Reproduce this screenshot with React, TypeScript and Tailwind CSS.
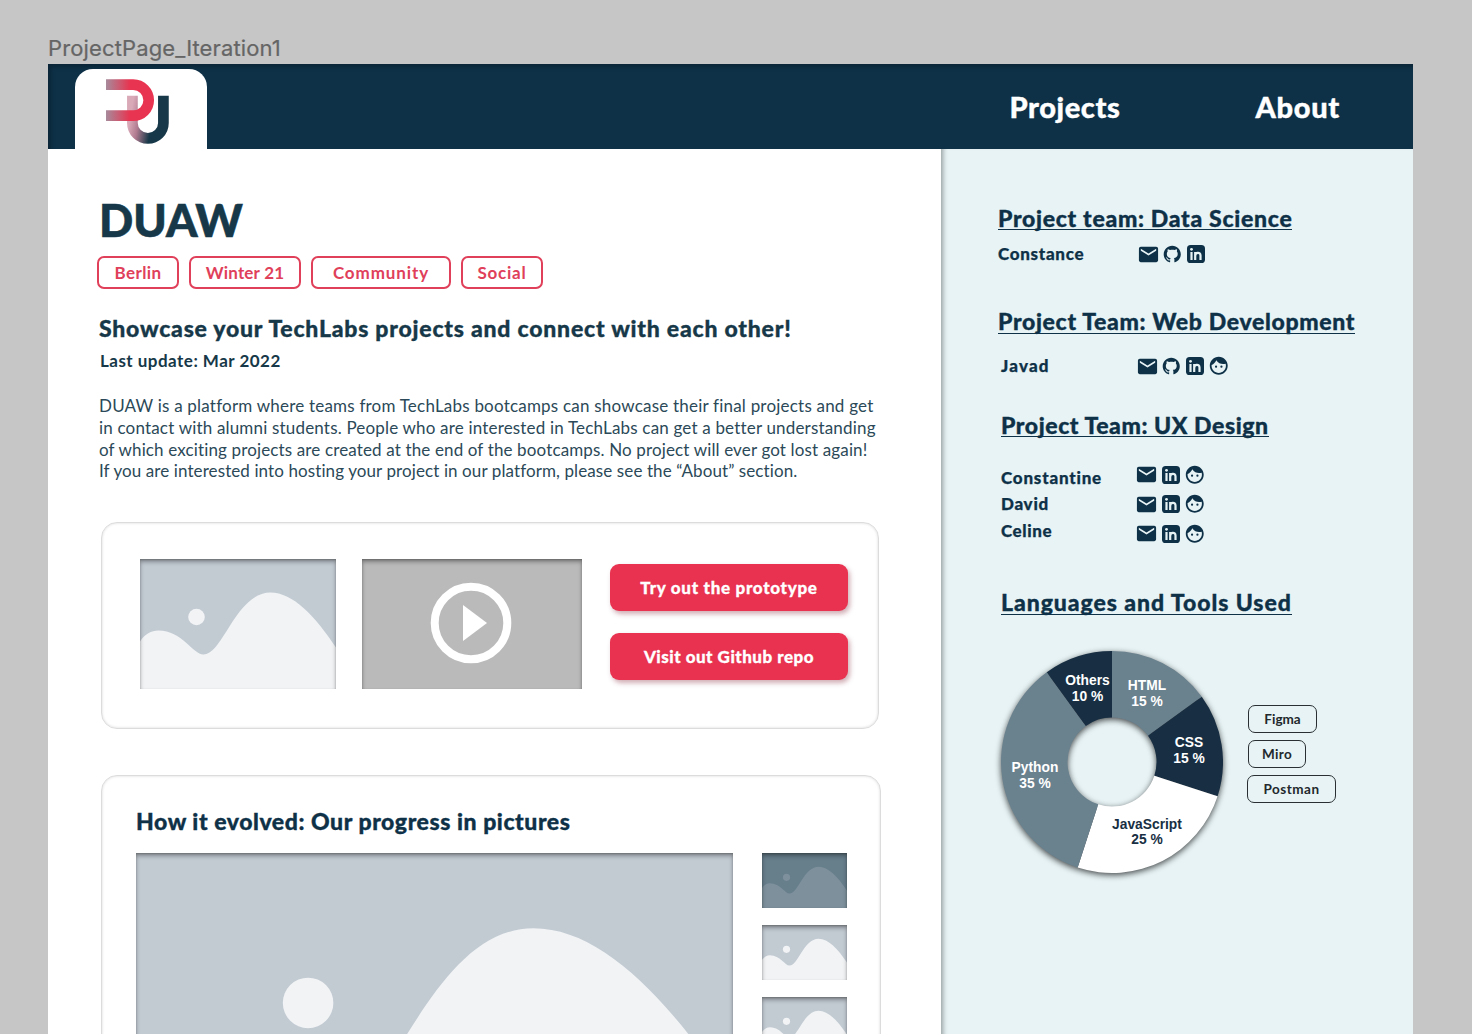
import type { ReactNode } from "react";
import { MdEmail, MdFace } from "react-icons/md";
import { RiGithubFill } from "react-icons/ri";

type IconName = "mail" | "github" | "linkedin" | "face";

function Logo() {
  return (
    <svg width="64" height="66" viewBox="0 0 64 66" fill="none" className="mt-[10px]">
      <defs>
        <linearGradient id="logo-red" gradientUnits="userSpaceOnUse" x1="0" y1="0" x2="24" y2="0">
          <stop offset="0" stopColor="#a78a9b" />
          <stop offset="1" stopColor="#e83450" />
        </linearGradient>
        <linearGradient id="logo-navy" gradientUnits="userSpaceOnUse" x1="22" y1="50" x2="44" y2="54">
          <stop offset="0" stopColor="#d9a9b8" />
          <stop offset="0.4" stopColor="#b07a8f" />
          <stop offset="1" stopColor="#163848" />
        </linearGradient>
      </defs>
      <path d="M26.4 16.7V43.9A15.5 15.5 0 0 0 57.4 43.9V16.7" stroke="url(#logo-navy)" strokeWidth="10.7" />
      <path d="M0 5.7H27.2A15.5 15.5 0 0 1 27.2 36.7H0" stroke="url(#logo-red)" strokeWidth="10.7" />
    </svg>
  );
}

function Landscape({ className, sky = "#c2cad2", hill = "#f1f3f5" }: { className: string; sky?: string; hill?: string }) {
  return (
    <div className={`relative overflow-hidden ${className}`}>
      <svg viewBox="0 0 196 130.5" preserveAspectRatio="xMidYMid slice" className="block h-full w-full">
        <rect width="196" height="130.5" fill={sky} />
        <circle cx="56.5" cy="58" r="8.3" fill={hill} />
        <path
          d="M0 82.5C5 75 11 71.5 18.5 71.5C42 71.5 53 95.5 63.5 95.5C83 95.5 96 33.5 130.5 33.5C153 33.5 175 57 196 88.5V131H0Z"
          fill={hill}
        />
      </svg>
      <div className="absolute inset-0 shadow-[inset_0_3px_4px_rgba(0,0,0,0.32),inset_0_1px_2px_rgba(0,0,0,0.22)]" />
    </div>
  );
}

function Tag({ className, children }: { className: string; children: ReactNode }) {
  return (
    <span className={`flex h-[33px] items-center justify-center rounded-[7px] border-2 border-[#e0405a] text-[17px] font-bold text-[#e0405a] ${className}`}>
      {children}
    </span>
  );
}

function CtaButton({ className, children }: { className: string; children: ReactNode }) {
  return (
    <button className={`h-[47px] w-[238px] rounded-[9px] bg-[#e83250] text-[17px] font-black text-white shadow-[2px_3px_5px_rgba(120,20,40,0.35)] [-webkit-text-stroke:0.3px] ${className}`}>
      {children}
    </button>
  );
}

function ContactIcon({ name }: { name: IconName }) {
  return (
    <span className="flex w-6 shrink-0 items-center justify-center">
      {name === "mail" && <MdEmail size={23} />}
      {name === "github" && <RiGithubFill size={20.5} />}
      {name === "face" && <MdFace size={21.5} />}
      {name === "linkedin" && (
        <svg width="18" height="18" viewBox="0 0 18 18">
          <rect width="18" height="18" rx="3.6" fill="currentColor" />
          <circle cx="4.5" cy="4.3" r="1.4" fill="#e7f3f5" />
          <path d="M4.5 7V14.9M8.2 7V14.9M8.2 11C8.2 7 13.5 6.6 13.5 10.6V14.9" fill="none" stroke="#e7f3f5" strokeWidth="2.2" />
        </svg>
      )}
    </span>
  );
}

function Contacts({ icons, className = "" }: { icons: IconName[]; className?: string }) {
  return (
    <div className={`flex h-6 items-center ${className}`}>
      {icons.map((name) => (
        <ContactIcon key={name} name={name} />
      ))}
    </div>
  );
}

function SideHeading({ className, children }: { className: string; children: ReactNode }) {
  return (
    <h2 className={`h-[23.5px] w-fit whitespace-nowrap border-b-[1.5px] border-[#0e3148] text-[23px] font-black [-webkit-text-stroke:0.35px] ${className}`}>
      {children}
    </h2>
  );
}

const slices = [
  { label: "HTML", share: 15, fill: "#6a818e", text: "#fff", x: 147, y: 39 },
  { label: "CSS", share: 15, fill: "#182f43", text: "#fff", x: 189, y: 96 },
  { label: "JavaScript", share: 25, fill: "#ffffff", text: "#182f43", x: 147, y: 177.5 },
  { label: "Python", share: 35, fill: "#6a818e", text: "#fff", x: 35, y: 121 },
  { label: "Others", share: 10, fill: "#182f43", text: "#fff", x: 87.5, y: 34 },
];

function Donut() {
  const cx = 112;
  const cy = 111;
  const point = (share: number, r: number) => {
    const a = (share / 100) * Math.PI * 2;
    return `${cx + r * Math.sin(a)} ${cy - r * Math.cos(a)}`;
  };
  let from = 0;
  return (
    <svg width="224" height="224" viewBox="0 0 224 224" className="shrink-0 overflow-visible">
      <g className="drop-shadow-[0_2px_3px_rgba(0,0,0,0.7)]">
        {slices.map((s) => {
          const start = from;
          from += s.share;
          return (
            <path
              key={s.label}
              fill={s.fill}
              d={`M${point(start, 111)}A111 111 0 0 1 ${point(from, 111)}L${point(from, 44.5)}A44.5 44.5 0 0 0 ${point(start, 44.5)}Z`}
            />
          );
        })}
      </g>
      <g className="font-['Liberation_Sans',sans-serif] text-[13.8px] font-bold" textAnchor="middle">
        {slices.map((s) => (
          <text key={s.label} fill={s.text}>
            <tspan x={s.x} y={s.y}>{s.label}</tspan>
            <tspan x={s.x} dy="15.5">{s.share} %</tspan>
          </text>
        ))}
      </g>
    </svg>
  );
}

function Tool({ className, children }: { className: string; children: ReactNode }) {
  return (
    <span className={`flex h-[27.5px] items-center justify-center rounded-[7px] border-[1.5px] border-[#2a2f33] text-[13.5px] font-bold text-[#22282c] ${className}`}>
      {children}
    </span>
  );
}

export default function App() {
  return (
    <div className="h-[1034px] w-[1472px] overflow-hidden bg-[#c6c6c6] pl-12 font-['Lato',sans-serif]">
      <div className="flex h-16 items-end pb-[3px] font-['Inter',sans-serif] text-[22px] leading-[26px] tracking-[0.13px] text-[#656565] [-webkit-text-stroke:0.2px]">
        ProjectPage_Iteration1
      </div>

      <div className="w-[1365px]">
        <header className="flex h-[85px] items-end bg-[#0e3148] shadow-[inset_4px_4px_4px_-1px_rgba(0,0,0,0.25)]">
          <div className="ml-[27px] flex h-20 w-[132px] justify-center rounded-t-[18px] bg-white pr-[6px]">
            <Logo />
          </div>
          <nav className="ml-auto flex h-[85px] items-center pr-[73px] text-[29px] font-black text-white [-webkit-text-stroke:0.4px]">
            <a className="mr-[135px] tracking-[0.6px]">Projects</a>
            <a className="tracking-[0.7px]">About</a>
          </nav>
        </header>

        <div className="flex h-[900px]">
          <main className="w-[893px] shrink-0 overflow-hidden bg-white pl-[51px] text-[#163848]">
            <h1 className="mt-[43px] h-14 text-[45px] leading-[56px] font-black [-webkit-text-stroke:0.6px]">DUAW</h1>
            <div className="-ml-0.5 mt-2 flex gap-2.5">
              <Tag className="w-[82px] tracking-[0.4px]">Berlin</Tag>
              <Tag className="w-[112px] tracking-[0.2px]">Winter 21</Tag>
              <Tag className="w-[140px] tracking-[0.9px]">Community</Tag>
              <Tag className="w-[82px] tracking-[0.75px]">Social</Tag>
            </div>
            <h2 className="mt-6 h-[31px] text-[23px] leading-[30px] font-black tracking-[0.78px] whitespace-nowrap [-webkit-text-stroke:0.35px]">
              Showcase your TechLabs projects and connect with each other!
            </h2>
            <p className="mt-[5px] ml-px text-[17px] leading-[23px] font-bold tracking-[0.48px]">Last update: Mar 2022</p>
            <div className="mt-[23px] text-[17px] leading-[21.75px] whitespace-nowrap text-[#2b4958]">
              <p className="tracking-[0.21px]">DUAW is a platform where teams from TechLabs bootcamps can showcase their final projects and get</p>
              <p className="tracking-[0.18px]">in contact with alumni students. People who are interested in TechLabs can get a better understanding</p>
              <p className="tracking-[0.14px]">of which exciting projects are created at the end of the bootcamps. No project will ever got lost again!</p>
              <p className="tracking-[0.1px]">If you are interested into hosting your project in our platform, please see the “About” section.</p>
            </div>

            <section className="mt-10 ml-0.5 flex h-[207px] w-[778px] rounded-[16px] border border-[#dcdcdc] pt-[35.5px] pl-[38px] shadow-[inset_0_0_3px_rgba(0,0,0,0.16)]">
              <Landscape className="h-[130.5px] w-[196px]" />
              <div className="ml-[26px] flex h-[130.5px] w-[220px] items-center justify-center bg-[#bababa] shadow-[inset_0_3px_4px_rgba(0,0,0,0.32),inset_0_1px_2px_rgba(0,0,0,0.22)]">
                <svg width="82" height="82" viewBox="0 0 82 82" className="-mt-0.5 mr-0.5">
                  <circle cx="41" cy="41" r="36.3" fill="none" stroke="#fff" strokeWidth="8" />
                  <path d="M33 23V59L57 41Z" fill="#fff" />
                </svg>
              </div>
              <div className="mt-[5.5px] ml-7 flex flex-col gap-[22px]">
                <CtaButton className="tracking-[0.7px]">Try out the prototype</CtaButton>
                <CtaButton className="tracking-[0.5px]">Visit out Github repo</CtaButton>
              </div>
            </section>

            <section className="mt-[46px] ml-0.5 h-[450px] w-[780px] rounded-[16px] border border-[#dcdcdc] pl-[34px] shadow-[inset_0_0_3px_rgba(0,0,0,0.16)]">
              <h2 className="mt-[30px] text-[23px] leading-[30px] font-black tracking-[0.56px] text-[#0e3148] [-webkit-text-stroke:0.35px]">
                How it evolved: Our progress in pictures
              </h2>
              <div className="mt-[17px] flex">
                <Landscape className="h-[344px] w-[597px]" />
                <div className="ml-[29px] flex flex-col gap-[17px]">
                  <Landscape className="h-[55px] w-[85px]" sky="#677e8b" hill="#7d909c" />
                  <Landscape className="h-[55px] w-[85px]" />
                  <Landscape className="h-[55px] w-[85px]" />
                </div>
              </div>
            </section>
          </main>

          <aside className="w-[472px] bg-[#e7f3f5] pl-[57px] text-[#0e3148] shadow-[inset_6px_0_5px_-4px_rgba(0,0,0,0.35)]">
            <SideHeading className="mt-[57.5px] leading-[22px] tracking-[0.7px]">Project team: Data Science</SideHeading>
            <div className="mt-[12px] flex h-6 items-center text-[17px] font-black [-webkit-text-stroke:0.25px]">
              <span className="w-[138px] tracking-[0.7px]">Constance</span>
              <Contacts icons={["mail", "github", "linkedin"]} />
            </div>

            <SideHeading className="mt-[44px] leading-[23px] tracking-[0.67px]">Project Team: Web Development</SideHeading>
            <div className="mt-[20.5px] ml-[3px] flex h-6 items-center text-[17px] font-black [-webkit-text-stroke:0.25px]">
              <span className="w-[134px] tracking-[1.2px]">Javad</span>
              <Contacts icons={["mail", "github", "linkedin", "face"]} />
            </div>

            <SideHeading className="mt-[35.5px] ml-[3px] leading-[23px] tracking-[0.58px]">Project Team: UX Design</SideHeading>
            <div className="mt-[25.5px] ml-[3px] flex text-[17px] font-black [-webkit-text-stroke:0.25px]">
              <div className="mt-[2px] flex w-[133.5px] flex-col leading-[26.5px]">
                <span className="tracking-[0.8px]">Constantine</span>
                <span className="tracking-[0.7px]">David</span>
                <span className="tracking-[0.6px]">Celine</span>
              </div>
              <div className="flex flex-col gap-[5.5px]">
                <Contacts icons={["mail", "linkedin", "face"]} />
                <Contacts icons={["mail", "linkedin", "face"]} />
                <Contacts icons={["mail", "linkedin", "face"]} />
              </div>
            </div>

            <SideHeading className="mt-[45.5px] ml-[3px] leading-[22px] tracking-[0.95px]">Languages and Tools Used</SideHeading>
            <div className="mt-[36.5px] ml-[2px] flex items-start">
              <Donut />
              <div className="mt-[54px] ml-[23px] flex flex-col gap-[7.5px]">
                <Tool className="ml-px w-[69px]">Figma</Tool>
                <Tool className="ml-px w-[58px] tracking-[0.3px]">Miro</Tool>
                <Tool className="w-[89px] tracking-[0.5px]">Postman</Tool>
              </div>
            </div>
          </aside>
        </div>
      </div>
    </div>
  );
}
